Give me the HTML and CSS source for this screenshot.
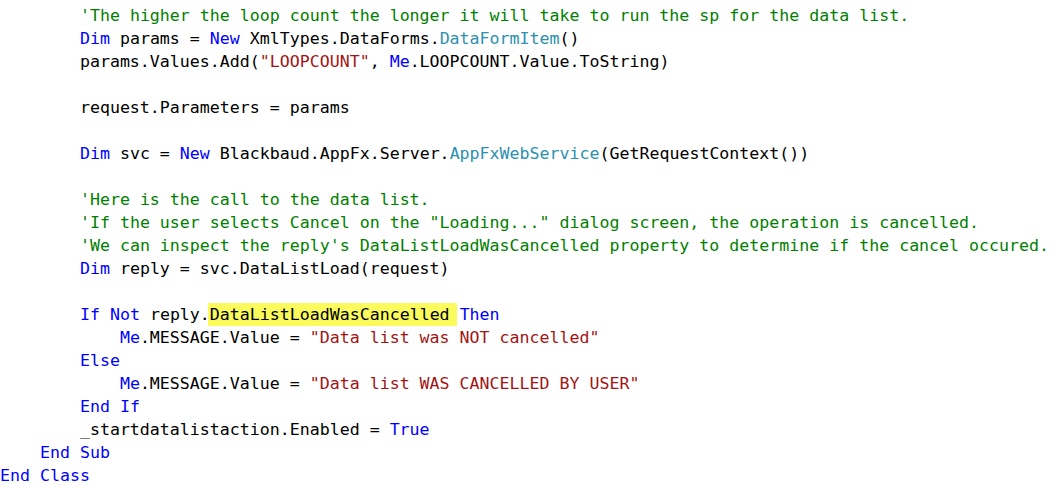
FILE: index.html
```html
<!DOCTYPE html>
<html>
<head>
<meta charset="utf-8">
<link rel="stylesheet" href="styles.css">
</head>
<body>
<div class="code">
<div class="ln">        <span class="c">'The higher the loop count the longer it will take to run the sp for the data list.</span></div>
<div class="ln">        <span class="k">Dim</span> params = <span class="k">New</span> XmlTypes.DataForms.<span class="t">DataFormItem</span>()</div>
<div class="ln">        params.Values.Add(<span class="s">"LOOPCOUNT"</span>, <span class="k">Me</span>.LOOPCOUNT.Value.ToString)</div>
<div class="ln"> </div>
<div class="ln">        request.Parameters = params</div>
<div class="ln"> </div>
<div class="ln">        <span class="k">Dim</span> svc = <span class="k">New</span> Blackbaud.AppFx.Server.<span class="t">AppFxWebService</span>(GetRequestContext())</div>
<div class="ln"> </div>
<div class="ln">        <span class="c">'Here is the call to the data list.</span></div>
<div class="ln">        <span class="c">'If the user selects Cancel on the "Loading..." dialog screen, the operation is cancelled.</span></div>
<div class="ln">        <span class="c">'We can inspect the reply's DataListLoadWasCancelled property to determine if the cancel occured.</span></div>
<div class="ln">        <span class="k">Dim</span> reply = svc.DataListLoad(request)</div>
<div class="ln"> </div>
<div class="ln">        <span class="k">If</span> <span class="k">Not</span> reply.<span class="hl">DataListLoadWasCancelled</span> <span class="k">Then</span></div>
<div class="ln">            <span class="k">Me</span>.MESSAGE.Value = <span class="s">"Data list was NOT cancelled"</span></div>
<div class="ln">        <span class="k">Else</span></div>
<div class="ln">            <span class="k">Me</span>.MESSAGE.Value = <span class="s">"Data list WAS CANCELLED BY USER"</span></div>
<div class="ln">        <span class="k">End</span> <span class="k">If</span></div>
<div class="ln">        _startdatalistaction.Enabled = <span class="k">True</span></div>
<div class="ln">    <span class="k">End</span> <span class="k">Sub</span></div>
<div class="ln"><span class="k">End</span> <span class="k">Class</span></div>
</div>
</body>
</html>
```
FILE: styles.css
```css
html, body {
  margin: 0;
  padding: 0;
  background: #ffffff;
}
.code {
  padding: 4px 0 0 0;
  font-family: "DejaVu Sans Mono", "Liberation Mono", monospace;
  font-size: 16.6px;
  line-height: 23px;
  color: #000000;
}
.ln {
  white-space: pre;
  height: 23px;
}
.k { color: #0000ff; }
.c { color: #008000; }
.s { color: #a31515; }
.t { color: #2b91af; }
.hl {
  display: inline-block;
  vertical-align: top;
  height: 23px;
  background: #fbfb5e;
  margin-left: -2px;
  padding-left: 2px;
  margin-right: -7px;
  padding-right: 7px;
}
```
